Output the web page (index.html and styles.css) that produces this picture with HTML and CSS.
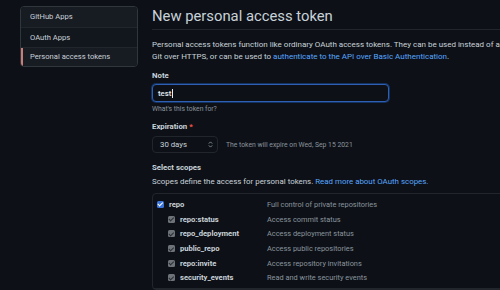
FILE: index.html
```html
<!DOCTYPE html>
<html lang="en">
  <head>
    <meta charset="UTF-8" />
    <meta name="viewport" content="width=device-width, initial-scale=1.0" />
    <title>New personal access token</title>
    <link rel="stylesheet" href="styles.css">
  </head>
  <body>
    <div class="layout">
      <nav class="menu">
        <a class="menu-item hover">GitHub Apps</a>
        <a class="menu-item">OAuth Apps</a>
        <a class="menu-item selected">Personal access tokens</a>
      </nav>

      <main class="content">
        <h2 class="page-head">New personal access token</h2>
        <p class="intro">
          Personal access tokens function like ordinary OAuth access tokens. They can be used instead of a password for<br />
          Git over HTTPS, or can be used to <a class="link">authenticate to the API over Basic Authentication</a>.
        </p>

        <label class="field-label" for="note">Note</label>
        <div class="note-input">
          <span class="note-value">test</span><span class="caret"></span>
        </div>
        <p class="hint">What's this token for?</p>

        <label class="field-label">Expiration <span class="required">*</span></label>
        <div class="expire-row">
          <div class="select">
            <span>30 days</span>
            <svg class="select-arrows" width="5" height="7" viewBox="0 0 5 7">
              <path d="M0.8 2.6 L2.5 0.9 L4.2 2.6" fill="none" stroke="#8b949e" stroke-width="0.9" />
              <path d="M0.8 4.4 L2.5 6.1 L4.2 4.4" fill="none" stroke="#8b949e" stroke-width="0.9" />
            </svg>
          </div>
          <span class="hint">The token will expire on Wed, Sep 15 2021</span>
        </div>

        <h3 class="field-label scopes-title">Select scopes</h3>
        <p class="scopes-text">
          Scopes define the access for personal tokens. <a class="link">Read more about OAuth scopes.</a>
        </p>

        <div class="scopes-box">
          <div class="scope-row">
            <div class="scope-name parent">
              <span class="check checked"></span>repo
            </div>
            <div class="scope-desc">Full control of private repositories</div>
          </div>
          <div class="scope-row">
            <div class="scope-name child">
              <span class="check disabled"></span>repo:status
            </div>
            <div class="scope-desc">Access commit status</div>
          </div>
          <div class="scope-row">
            <div class="scope-name child">
              <span class="check disabled"></span>repo_deployment
            </div>
            <div class="scope-desc">Access deployment status</div>
          </div>
          <div class="scope-row">
            <div class="scope-name child">
              <span class="check disabled"></span>public_repo
            </div>
            <div class="scope-desc">Access public repositories</div>
          </div>
          <div class="scope-row">
            <div class="scope-name child">
              <span class="check disabled"></span>repo:invite
            </div>
            <div class="scope-desc">Access repository invitations</div>
          </div>
          <div class="scope-row">
            <div class="scope-name child">
              <span class="check disabled"></span>security_events
            </div>
            <div class="scope-desc">Read and write security events</div>
          </div>
          <div class="scope-divider"></div>
        </div>
      </main>
    </div>
  </body>
</html>
```

FILE: styles.css
```css
* {
  box-sizing: border-box;
  margin: 0;
  padding: 0;
}

html,
body {
  overflow: hidden;
}

body {
  font-family: Roboto, "Liberation Sans", sans-serif;
  background-color: #0d1117;
  color: #c9d1d9;
  font-size: 7.6px;
  width: 500px;
  height: 290px;
}

.layout {
  display: flex;
  gap: 14px;
  padding: 6px 0 0 20px;
}

/* menu lateral */
.menu {
  flex: 0 0 118px;
  align-self: flex-start;
  display: flex;
  flex-direction: column;
  border: 1px solid #30363d;
  border-radius: 4px;
  overflow: hidden;
  background-color: #0d1117;
}

.menu-item {
  position: relative;
  display: flex;
  align-items: center;
  height: 19.8px;
  padding-left: 9px;
  color: #c9d1d9;
  background-color: #12161d;
}

.menu-item + .menu-item {
  border-top: 1px solid #21262d;
}

.menu-item.hover,
.menu-item.selected {
  background-color: #171b22;
}

.menu-item.selected::before {
  content: "";
  position: absolute;
  left: 0;
  top: 0;
  bottom: 0;
  width: 2px;
  background-color: #c97d79;
}

/* conteudo */
.content {
  flex: 0 0 470px;
  display: flex;
  flex-direction: column;
  align-items: flex-start;
}

.page-head {
  align-self: stretch;
  font-size: 14.8px;
  font-weight: 400;
  line-height: 17px;
  padding-top: 2px;
  padding-bottom: 4px;
  border-bottom: 1px solid #21262d;
  color: #c9d1d9;
}

.intro {
  margin-top: 9px;
  font-size: 8px;
  line-height: 12px;
  white-space: nowrap;
}

.link {
  color: #58a6ff;
}

.field-label {
  display: block;
  margin-top: 8px;
  font-size: 7.8px;
  font-weight: 700;
  line-height: 10px;
  color: #c9d1d9;
}

.required {
  color: #f85149;
}

.note-input {
  display: flex;
  align-items: center;
  width: 237px;
  height: 18px;
  margin-top: 3px;
  padding-left: 5px;
  border: 1.5px solid #2f5fb3;
  border-radius: 4px;
  background-color: #0d1117;
  box-shadow: 0 0 0 1px rgba(31, 111, 235, 0.35);
  font-size: 7.8px;
  font-weight: 500;
  color: #e6edf3;
}

.caret {
  width: 1px;
  height: 9px;
  margin-left: 0.5px;
  background-color: #e6edf3;
}

.hint {
  margin-top: 2px;
  font-size: 6.8px;
  line-height: 10px;
  color: #8b949e;
}

.expire-row {
  display: flex;
  align-items: center;
  gap: 8px;
  margin-top: 4px;
}

.expire-row .hint {
  margin-top: 0;
}

.select {
  display: flex;
  align-items: center;
  justify-content: space-between;
  width: 66px;
  height: 17px;
  padding: 0 4px 0 7px;
  border: 1px solid #21262d;
  border-radius: 4px;
  background-color: #0d1117;
  font-size: 7.8px;
  color: #c9d1d9;
}

.scopes-title {
  margin-top: 10px;
}

.scopes-text {
  margin-top: 4px;
  font-size: 7.9px;
  line-height: 10px;
}

.scopes-box {
  width: 420px;
  margin-top: 6px;
  padding-top: 3px;
  border: 1px solid #21262d;
  border-radius: 4px;
}

.scope-row {
  display: flex;
  align-items: center;
  height: 14.7px;
}

.scope-name {
  display: flex;
  align-items: center;
  gap: 5px;
  width: 114px;
  font-size: 7.6px;
  font-weight: 700;
  color: #c9d1d9;
}

.scope-name.parent {
  padding-left: 4px;
}

.scope-name.child {
  padding-left: 15px;
}

.scope-desc {
  font-size: 7.4px;
  color: #8b949e;
}

.check {
  position: relative;
  flex: 0 0 7px;
  width: 7px;
  height: 7px;
  border-radius: 1.5px;
}

.check.checked {
  background-color: #3a73d8;
}

.check.disabled {
  background-color: #6e737a;
}

.check::after {
  content: "";
  position: absolute;
  left: 2.3px;
  top: 0.6px;
  width: 1.6px;
  height: 3.6px;
  border-right: 1.1px solid #fff;
  border-bottom: 1.1px solid #fff;
  transform: rotate(45deg);
}

.check.disabled::after {
  border-color: #2b2f35;
}

.scope-divider {
  margin-top: 3px;
  border-top: 1px solid #21262d;
}
```
